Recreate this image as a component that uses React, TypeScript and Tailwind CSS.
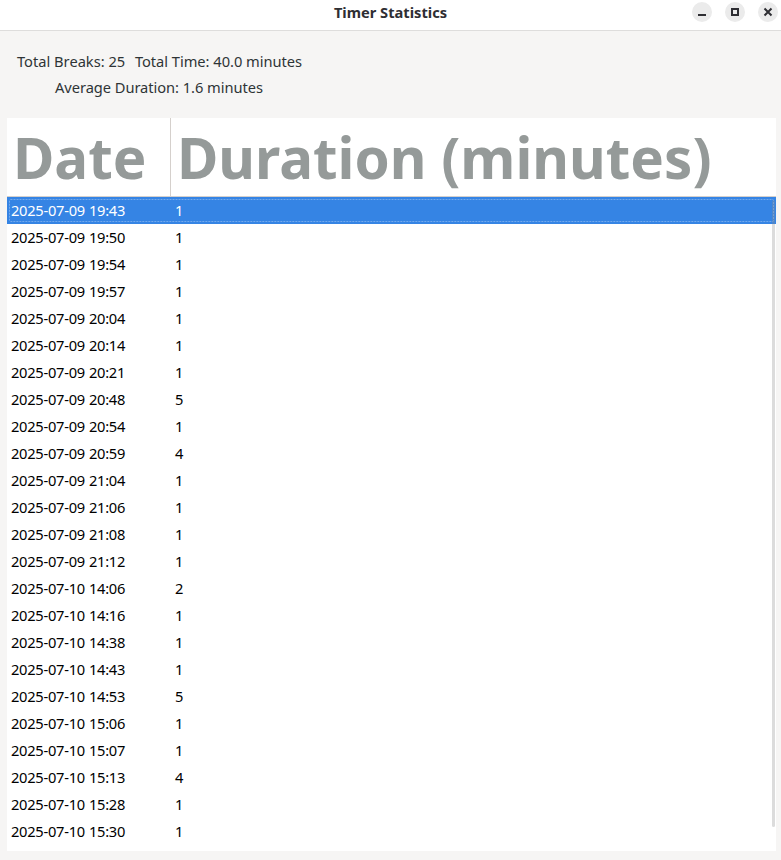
const rows: [string, number][] = [
  ['2025-07-09 19:43', 1],
  ['2025-07-09 19:50', 1],
  ['2025-07-09 19:54', 1],
  ['2025-07-09 19:57', 1],
  ['2025-07-09 20:04', 1],
  ['2025-07-09 20:14', 1],
  ['2025-07-09 20:21', 1],
  ['2025-07-09 20:48', 5],
  ['2025-07-09 20:54', 1],
  ['2025-07-09 20:59', 4],
  ['2025-07-09 21:04', 1],
  ['2025-07-09 21:06', 1],
  ['2025-07-09 21:08', 1],
  ['2025-07-09 21:12', 1],
  ['2025-07-10 14:06', 2],
  ['2025-07-10 14:16', 1],
  ['2025-07-10 14:38', 1],
  ['2025-07-10 14:43', 1],
  ['2025-07-10 14:53', 5],
  ['2025-07-10 15:06', 1],
  ['2025-07-10 15:07', 1],
  ['2025-07-10 15:13', 4],
  ['2025-07-10 15:28', 1],
  ['2025-07-10 15:30', 1],
];

function WindowButton({ label, children }: { label: string; children: React.ReactNode }) {
  return (
    <button aria-label={label} className="flex size-5 items-center justify-center rounded-full bg-[#ebebeb]">
      <svg width="20" height="20" viewBox="0 0 20 20" fill="none" stroke="#2e2e33" strokeWidth="2">
        {children}
      </svg>
    </button>
  );
}

function TitleBar() {
  return (
    <header className="grid h-[31px] grid-cols-[1fr_auto_1fr] border-b border-[#dedddc] bg-white">
      <span />
      <h1 className="text-[14.667px] leading-6 font-bold text-[#2e2e33]">Timer Statistics</h1>
      <div className="flex justify-end gap-[13px] pt-[2px] pr-[3px]">
        <WindowButton label="Minimize">
          <path d="M6 13h8" />
        </WindowButton>
        <WindowButton label="Maximize">
          <path d="M7 7h6v6H7z" />
        </WindowButton>
        <WindowButton label="Close">
          <path d="M6.5 6.5l7 7M13.5 6.5l-7 7" />
        </WindowButton>
      </div>
    </header>
  );
}

export default function App() {
  return (
    <div className="flex h-[860px] w-[781px] flex-col overflow-hidden bg-[#f6f5f4] font-['Noto_Sans',sans-serif] text-[14.667px]">
      <TitleBar />
      <section className="flex h-[87px] w-[302px] flex-col pt-[17px] pl-[17px] leading-[26px] whitespace-nowrap text-[#2e3436]">
        <div className="flex justify-between">
          <span>Total Breaks: 25</span>
          <span className="tracking-[-0.03px]">Total Time: 40.0 minutes</span>
        </div>
        <div className="pl-[38px] tracking-[-0.05px]">Average Duration: 1.6 minutes</div>
      </section>
      <main className="relative ml-[7px] h-[733px] w-[769px] bg-white">
        <div className="flex h-[79px] border-b border-[#d5d0cc] text-[56.5px] leading-[80px] font-bold whitespace-nowrap text-[#959a99]">
          <div className="h-[78px] w-[164px] border-r border-[#d5d0cc] pl-[6px]">Date</div>
          <div className="h-[78px] pl-[6px]">Duration (minutes)</div>
        </div>
        {rows.map(([date, minutes], i) => (
          <div
            key={date}
            className={
              i === 0
                ? 'relative flex h-[27px] bg-[#3584e4] leading-[27px] text-white'
                : 'flex h-[27px] leading-[27px] text-black'
            }
          >
            <span className="w-[164px] pl-1 tracking-[-0.26px] [word-spacing:0.5px]">{date}</span>
            <span className="pl-1">{minutes}</span>
            {i === 0 && (
              <svg className="absolute inset-0" width="769" height="27" fill="none">
                <rect x="2.5" y="2.5" width="764" height="22" rx="1" stroke="#72a9ed" strokeDasharray="2 1" />
              </svg>
            )}
          </div>
        ))}
        <div className="absolute top-[82px] right-px h-[627px] w-[3px] rounded-full bg-[#8b8b8b]/30" />
      </main>
    </div>
  );
}
